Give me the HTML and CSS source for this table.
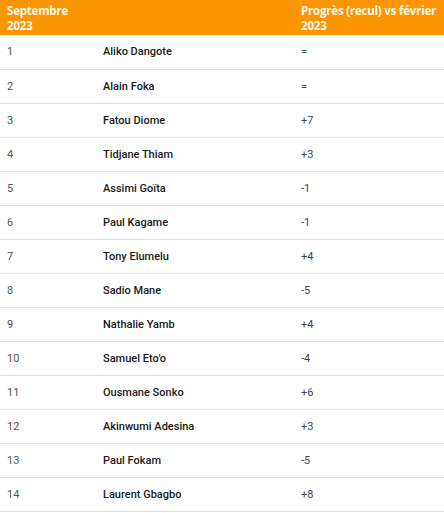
FILE: index.html
```html
<!DOCTYPE html>
<html lang="fr">
<head>
<meta charset="utf-8">
<link rel="stylesheet" href="styles.css">
</head>
<body>
<table class="rank">
  <thead>
    <tr>
      <th class="c-rank">Septembre 2023</th>
      <th class="c-name"></th>
      <th class="c-prog">Progrès (recul) vs février 2023</th>
    </tr>
  </thead>
  <tbody>
    <tr><td class="c-rank">1</td><td class="c-name">Aliko Dangote</td><td class="c-prog">=</td></tr>
    <tr><td class="c-rank">2</td><td class="c-name">Alain Foka</td><td class="c-prog">=</td></tr>
    <tr><td class="c-rank">3</td><td class="c-name">Fatou Diome</td><td class="c-prog">+7</td></tr>
    <tr><td class="c-rank">4</td><td class="c-name">Tidjane Thiam</td><td class="c-prog">+3</td></tr>
    <tr><td class="c-rank">5</td><td class="c-name">Assimi Goïta</td><td class="c-prog">-1</td></tr>
    <tr><td class="c-rank">6</td><td class="c-name">Paul Kagame</td><td class="c-prog">-1</td></tr>
    <tr><td class="c-rank">7</td><td class="c-name">Tony Elumelu</td><td class="c-prog">+4</td></tr>
    <tr><td class="c-rank">8</td><td class="c-name">Sadio Mane</td><td class="c-prog">-5</td></tr>
    <tr><td class="c-rank">9</td><td class="c-name">Nathalie Yamb</td><td class="c-prog">+4</td></tr>
    <tr><td class="c-rank">10</td><td class="c-name">Samuel Eto’o</td><td class="c-prog">-4</td></tr>
    <tr><td class="c-rank">11</td><td class="c-name">Ousmane Sonko</td><td class="c-prog">+6</td></tr>
    <tr><td class="c-rank">12</td><td class="c-name">Akinwumi Adesina</td><td class="c-prog">+3</td></tr>
    <tr><td class="c-rank">13</td><td class="c-name">Paul Fokam</td><td class="c-prog">-5</td></tr>
    <tr><td class="c-rank">14</td><td class="c-name">Laurent Gbagbo</td><td class="c-prog">+8</td></tr>
  </tbody>
</table>
</body>
</html>
```
FILE: styles.css
```css
html, body {
  margin: 0;
  padding: 0;
  background: #ffffff;
}
body {
  font-family: Roboto, "Liberation Sans", Arial, sans-serif;
}
.rank {
  width: 444px;
  border-collapse: collapse;
  table-layout: fixed;
}
.rank th {
  background: #fb9502;
  color: #fff8ea;
  font-family: "Open Sans", Roboto, sans-serif;
  font-weight: 700;
  font-size: 11.5px;
  line-height: 15px;
  text-align: left;
  vertical-align: top;
  height: 35px;
  padding: 3px 7px 0 7px;
  box-sizing: border-box;
  letter-spacing: -0.2px;
}
.rank td {
  height: 34px;
  box-sizing: border-box;
  padding: 0 7px;
  border-bottom: 1px solid #dddddd;
  font-size: 11px;
  vertical-align: middle;
}
.c-rank { width: 96px; }
.c-name { width: 198px; }
.rank td.c-rank { color: #555555; }
.rank td.c-name { color: #1a1a1a; font-weight: 500; }
.rank td.c-prog { color: #444444; }
```
